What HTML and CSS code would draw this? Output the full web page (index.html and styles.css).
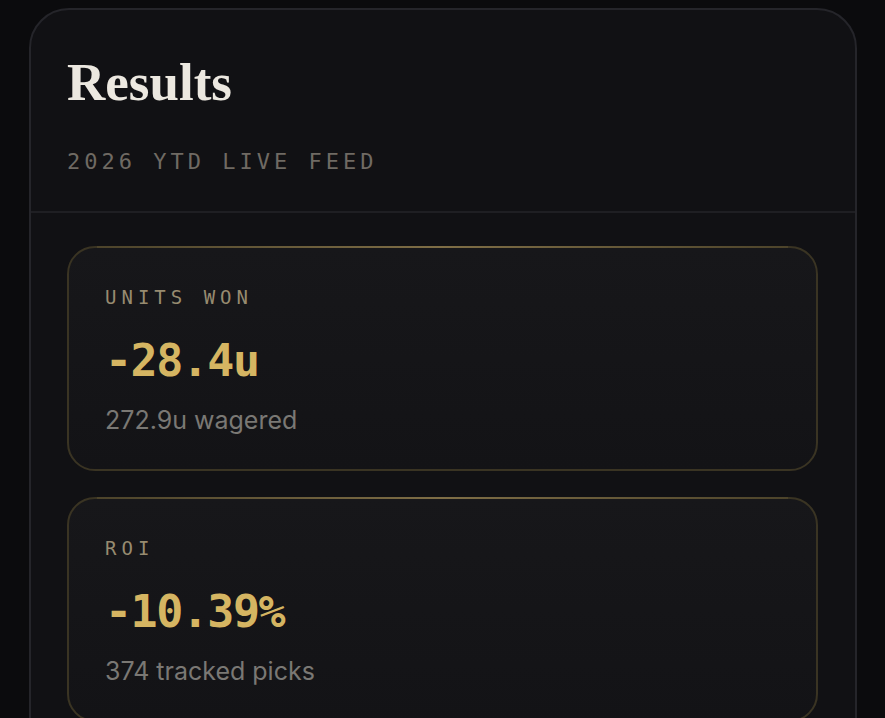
FILE: index.html
```html
<!DOCTYPE html>
<html>
<head>
<meta charset="utf-8">
<link rel="stylesheet" href="styles.css">
</head>
<body>
<section class="panel">
  <header class="panel-head">
    <h1 class="title">Results</h1>
    <p class="subtitle">2026 YTD LIVE FEED</p>
  </header>
  <div class="stats">
    <div class="stat">
      <div class="stat-label">UNITS WON</div>
      <div class="stat-value">-28.4u</div>
      <div class="stat-sub">272.9u wagered</div>
    </div>
    <div class="stat">
      <div class="stat-label">ROI</div>
      <div class="stat-value">-10.39%</div>
      <div class="stat-sub">374 tracked picks</div>
    </div>
  </div>
</section>
</body>
</html>
```
FILE: styles.css
```css
html, body {
  margin: 0;
  padding: 0;
  background: #0b0b0d;
  height: 100%;
  overflow: hidden;
}
body {
  padding: 8px 28px 0 29px;
  box-sizing: border-box;
}
.panel {
  border: 2px solid #25252a;
  border-radius: 40px;
  background: #111114;
  height: 900px;
  box-sizing: border-box;
}
.panel-head {
  padding: 42px 36px 0 36px;
  border-bottom: 2px solid #1f1f23;
  height: 203px;
  box-sizing: border-box;
}
.title {
  margin: 0;
  font-family: "Liberation Serif", "DejaVu Serif", serif;
  font-weight: 700;
  font-size: 53px;
  line-height: 60px;
  color: #ece8e0;
}
.subtitle {
  margin: 37px 0 0 0;
  font-family: "DejaVu Sans Mono", monospace;
  font-size: 22px;
  letter-spacing: 4px;
  color: #6f6a63;
  line-height: 26px;
}
.stats {
  padding: 33px 37px 0 36px;
  display: flex;
  flex-direction: column;
  gap: 26px;
}
.stat {
  position: relative;
  border: 2px solid #3a3423;
  border-radius: 28px;
  background: linear-gradient(180deg, #17171a 0%, #131316 100%);
  padding: 38px 36px 0 36px;
  height: 225px;
  box-sizing: border-box;
}
.stat::before {
  content: "";
  position: absolute;
  top: -2px;
  left: 28px;
  right: 28px;
  height: 2px;
  background: linear-gradient(90deg, rgba(120,104,60,0.3), #7f6e46 50%, rgba(120,104,60,0.3));
}
.stat-label {
  font-family: "DejaVu Sans Mono", monospace;
  font-size: 19px;
  letter-spacing: 5px;
  color: #978b70;
  line-height: 22px;
  font-weight: 400;
}
.stat-value {
  margin-top: 27px;
  font-family: "DejaVu Sans Mono", monospace;
  font-weight: 700;
  font-size: 45px;
  letter-spacing: -1.5px;
  line-height: 52px;
  color: #d5b562;
}
.stat-sub {
  margin-top: 18px;
  font-family: "Inter", "Noto Sans", sans-serif;
  font-size: 25px;
  line-height: 30px;
  color: #7a7874;
}
```
